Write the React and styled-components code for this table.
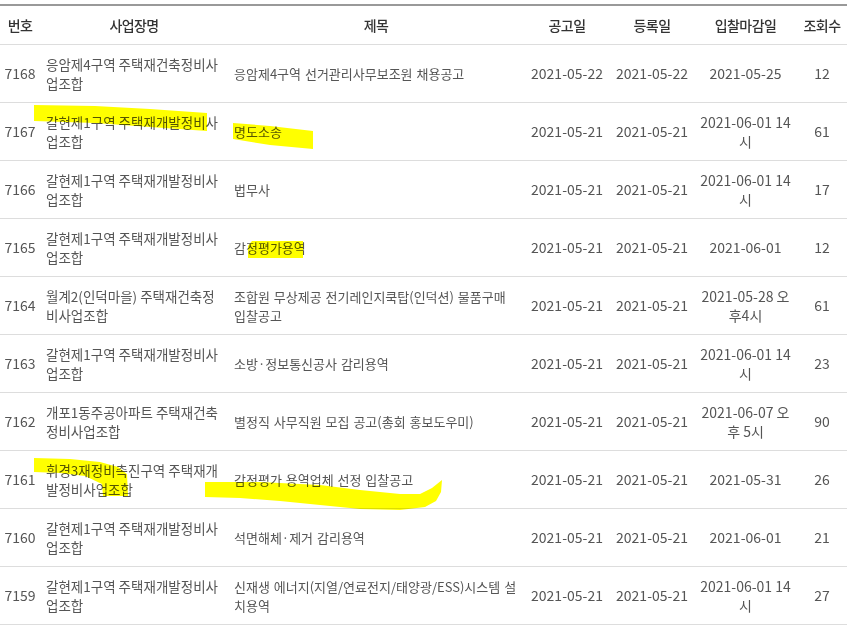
import React from "react";
import styled, { createGlobalStyle } from "styled-components";

const GlobalStyle = createGlobalStyle`
  body {
    margin: 0;
    background: #fff;
    font-family: "Noto Sans CJK KR", "Noto Sans", sans-serif;
  }
`;

const columns = [
  { key: "no", title: "번호", width: 40 },
  { key: "company", title: "사업장명", width: 188 },
  { key: "subject", title: "제목", width: 296 },
  { key: "noticeDate", title: "공고일", width: 86 },
  { key: "regDate", title: "등록일", width: 84 },
  { key: "deadline", title: "입찰마감일", width: 103 },
  { key: "views", title: "조회수", width: 50 },
];

const list_notice = [
  {
    no: 7168,
    company: "응암제4구역 주택재건축정비사업조합",
    subject: "응암제4구역 선거관리사무보조원 채용공고",
    noticeDate: "2021-05-22",
    regDate: "2021-05-22",
    deadline: "2021-05-25",
    views: 12,
  },
  {
    no: 7167,
    company: "갈현제1구역 주택재개발정비사업조합",
    subject: "명도소송",
    noticeDate: "2021-05-21",
    regDate: "2021-05-21",
    deadline: "2021-06-01 14시",
    views: 61,
  },
  {
    no: 7166,
    company: "갈현제1구역 주택재개발정비사업조합",
    subject: "법무사",
    noticeDate: "2021-05-21",
    regDate: "2021-05-21",
    deadline: "2021-06-01 14시",
    views: 17,
  },
  {
    no: 7165,
    company: "갈현제1구역 주택재개발정비사업조합",
    subject: "감정평가용역",
    noticeDate: "2021-05-21",
    regDate: "2021-05-21",
    deadline: "2021-06-01",
    views: 12,
  },
  {
    no: 7164,
    company: "월계2(인덕마을) 주택재건축정비사업조합",
    subject: "조합원 무상제공 전기레인지쿡탑(인덕션) 물품구매 입찰공고",
    noticeDate: "2021-05-21",
    regDate: "2021-05-21",
    deadline: "2021-05-28 오후4시",
    views: 61,
  },
  {
    no: 7163,
    company: "갈현제1구역 주택재개발정비사업조합",
    subject: "소방·정보통신공사 감리용역",
    noticeDate: "2021-05-21",
    regDate: "2021-05-21",
    deadline: "2021-06-01 14시",
    views: 23,
  },
  {
    no: 7162,
    company: "개포1동주공아파트 주택재건축정비사업조합",
    subject: "별정직 사무직원 모집 공고(총회 홍보도우미)",
    noticeDate: "2021-05-21",
    regDate: "2021-05-21",
    deadline: "2021-06-07 오후 5시",
    views: 90,
  },
  {
    no: 7161,
    company: "휘경3재정비촉진구역 주택재개발정비사업조합",
    subject: "감정평가 용역업체 선정 입찰공고",
    noticeDate: "2021-05-21",
    regDate: "2021-05-21",
    deadline: "2021-05-31",
    views: 26,
  },
  {
    no: 7160,
    company: "갈현제1구역 주택재개발정비사업조합",
    subject: "석면해체·제거 감리용역",
    noticeDate: "2021-05-21",
    regDate: "2021-05-21",
    deadline: "2021-06-01",
    views: 21,
  },
  {
    no: 7159,
    company: "갈현제1구역 주택재개발정비사업조합",
    subject: "신재생 에너지(지열/연료전지/태양광/ESS)시스템 설치용역",
    noticeDate: "2021-05-21",
    regDate: "2021-05-21",
    deadline: "2021-06-01 14시",
    views: 27,
  },
];

// marker strokes someone drew over the screenshot
const highlights = [
  "M34,105 L95,106 L150,109 L207,113 L207,131 L150,127 L95,123 L34,121 Z",
  "M233,123 L270,126 L313,131 L313,149 L270,145 L233,139 Z",
  "M252,241 L303,241 L303,258 L248,258 L248,246 Z",
  "M34,458 L70,459 L100,462 L118,467 L127,474 L128,496 L103,496 L102,484 L85,476 L60,473 L34,472 Z",
  "M205,482 L260,482 L320,485 L360,490 L400,494 L420,494 L432,488 L442,480 L441,492 L436,501 L425,507 L400,510 L360,509 L320,505 L280,501 L240,498 L205,497 Z",
];

const Wrapper = styled.div`
  position: relative;
  width: 847px;
  padding-top: 4px;
`;

const Table = styled.table`
  width: 847px;
  border-collapse: collapse;
  table-layout: fixed;
  border-top: 2px solid #999;
`;

const HeadCell = styled.th`
  height: 38px;
  padding: 0 2px;
  font-size: 14px;
  font-weight: 500;
  letter-spacing: -0.6px;
  color: #333;
  text-align: center;
  border-bottom: 1px solid #ddd;
  white-space: nowrap;
`;

const Row = styled.tr`
  height: 58px;
  border-bottom: 1px solid #ddd;
`;

const Cell = styled.td`
  padding: 0 ${(p) => (p.$tight ? "2px" : "6px")};
  font-size: ${(p) => p.$size || "14px"};
  word-spacing: ${(p) => p.$wordGap || "0"};
  line-height: 19px;
  color: #555;
  text-align: ${(p) => p.$align || "center"};
  vertical-align: middle;
  white-space: ${(p) => (p.$tight ? "nowrap" : "normal")};
  word-break: break-all;
`;

const Marker = styled.svg`
  position: absolute;
  top: 0;
  left: 0;
  pointer-events: none;
  mix-blend-mode: multiply;
`;

const App = () => {
  return (
    <>
      <GlobalStyle />
      <Wrapper>
        <Table>
          <colgroup>
            {columns.map((col) => (
              <col key={col.key} style={{ width: col.width }} />
            ))}
          </colgroup>
          <thead>
            <tr>
              {columns.map((col) => (
                <HeadCell key={col.key}>{col.title}</HeadCell>
              ))}
            </tr>
          </thead>
          <tbody>
            {list_notice.map((item) => (
              <Row key={item.no}>
                <Cell $tight>{item.no}</Cell>
                <Cell $align="left" $size="13.5px">
                  {item.company}
                </Cell>
                <Cell $align="left" $size="13px" $wordGap="1px">
                  {item.subject}
                </Cell>
                <Cell>{item.noticeDate}</Cell>
                <Cell>{item.regDate}</Cell>
                <Cell>{item.deadline}</Cell>
                <Cell>{item.views}</Cell>
              </Row>
            ))}
          </tbody>
        </Table>
        <Marker width="856" height="629" viewBox="0 0 856 629">
          {highlights.map((d, index) => (
            <path key={index} d={d} fill="#ffff00" />
          ))}
        </Marker>
      </Wrapper>
    </>
  );
};

export default App;
